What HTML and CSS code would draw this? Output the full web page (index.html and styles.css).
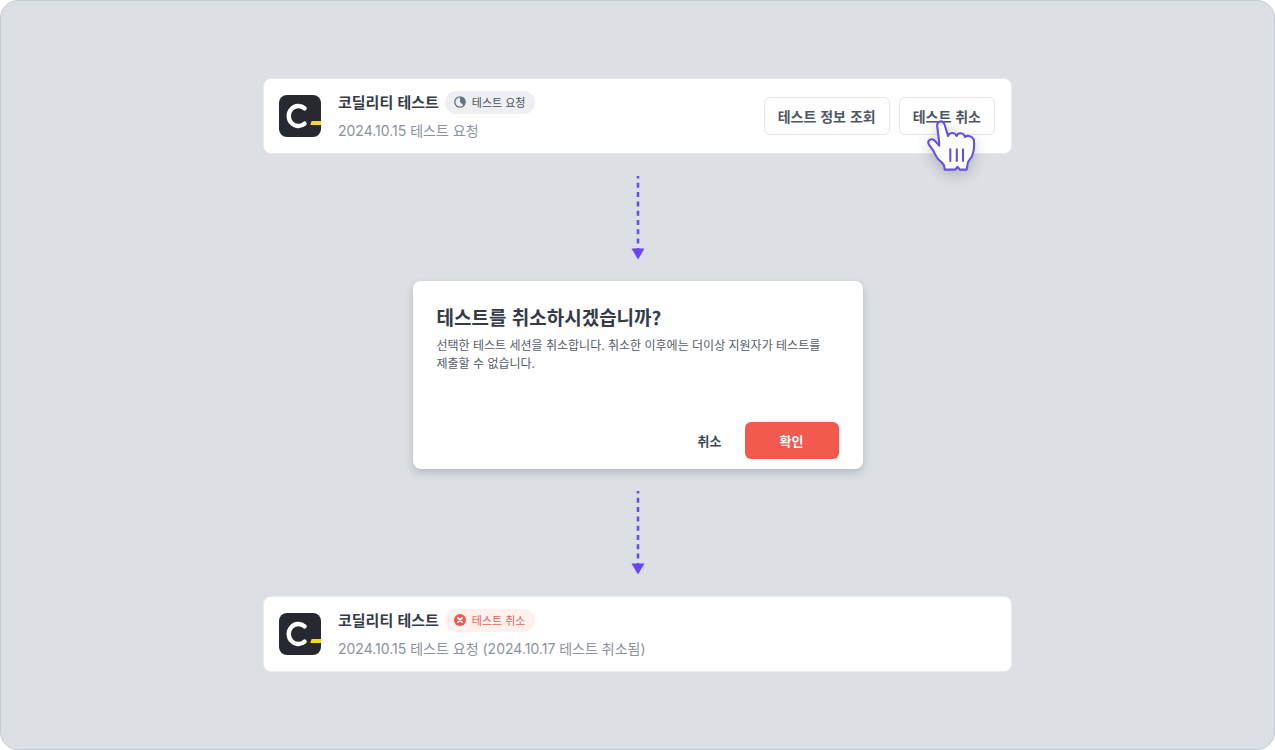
FILE: index.html
```
<!DOCTYPE html>
<html lang="ko">
<head>
  <meta charset="UTF-8">
  <meta name="viewport" content="width=device-width, initial-scale=1.0">
  <title>코딜리티 테스트 취소</title>
  <link rel="stylesheet" href="styles.css">
</head>
<body>
  <main class="board">

    <!-- 테스트 요청 상태 -->
    <section class="card">
      <svg class="logo" viewBox="0 0 42 42" aria-hidden="true">
        <rect width="42" height="42" rx="8" fill="#262930"/>
        <path d="M25.600 13.400A9.600 10 0 1 0 25.600 28.600" fill="none" stroke="#fff" stroke-width="4.4" stroke-linecap="round"/>
        <path d="M32.6 26H42v4H31.3z" fill="#f5dc17"/>
      </svg>
      <div class="info">
        <div class="title-row">
          <h2>코딜리티 테스트</h2>
          <span class="badge">
            <svg viewBox="0 0 12 12" aria-hidden="true">
              <circle cx="6" cy="6" r="5.2" fill="none" stroke="#68717e" stroke-width="1.3"/>
              <path d="M6 6V1a5 5 0 0 1 3.6 8.5z" fill="#68717e"/>
            </svg>
            테스트 요청
          </span>
        </div>
        <p class="date">2024.10.15 테스트 요청</p>
      </div>
      <div class="card-actions">
        <button type="button" class="btn">테스트 정보 조회</button>
        <div class="pointed">
          <button type="button" class="btn">테스트 취소</button>
          <svg class="hand" viewBox="10 8 56 56" aria-hidden="true">
            <path d="M24.2 32.3L22.2 16.5C21.7 10.3 28.3 9.8 29.7 15L33 26C34.5 22.2 40 22 41.5 26C43.3 22.2 48.5 22.3 50 27C52.5 24.7 57.2 26.2 58.8 29.5C59.6 36 59 42 56.8 46.5C55.5 48.8 53.4 50.4 52.8 53L51.7 59.6H44.8L42.6 56.8L40.2 59.6H29.6C30 55.6 28.4 53.5 25.5 51.4C21.5 48.5 20.6 45 18.5 41L14 34.7C11.4 29.8 16.8 28 19.5 30.4L24.2 35.6z" fill="#fff" stroke="#6450e6" stroke-width="2.1" stroke-linejoin="round"/>
            <path d="M35.3 39.2V51M41.8 39.2V51M48 39.2V51" fill="none" stroke="#6450e6" stroke-width="2.1" stroke-linecap="round"/>
          </svg>
        </div>
      </div>
    </section>

    <svg class="arrow" viewBox="0 0 14 83" aria-hidden="true">
      <path d="M7 0V75" stroke="#6450e6" stroke-width="2.6" stroke-dasharray="5 4.3" stroke-dashoffset="2.5"/>
      <path d="M.5 72.5h13L7 83.500z" fill="#6845fa"/>
    </svg>

    <!-- 확인 모달 -->
    <section class="dialog" role="dialog" aria-labelledby="dialog-title">
      <h1 id="dialog-title">테스트를 취소하시겠습니까?</h1>
      <p class="desc">선택한 테스트 세션을 취소합니다. 취소한 이후에는 더이상 지원자가 테스트를<br>제출할 수 없습니다.</p>
      <div class="dialog-actions">
        <button type="button" class="btn-text">취소</button>
        <button type="button" class="btn-danger">확인</button>
      </div>
    </section>

    <svg class="arrow" viewBox="0 0 14 83" aria-hidden="true">
      <path d="M7 0V75" stroke="#6450e6" stroke-width="2.6" stroke-dasharray="5 4.3" stroke-dashoffset="2.5"/>
      <path d="M.5 72.5h13L7 83.500z" fill="#6845fa"/>
    </svg>

    <!-- 테스트 취소 상태 -->
    <section class="card">
      <svg class="logo" viewBox="0 0 42 42" aria-hidden="true">
        <rect width="42" height="42" rx="8" fill="#262930"/>
        <path d="M25.600 13.400A9.600 10 0 1 0 25.600 28.600" fill="none" stroke="#fff" stroke-width="4.4" stroke-linecap="round"/>
        <path d="M32.6 26H42v4H31.3z" fill="#f5dc17"/>
      </svg>
      <div class="info">
        <div class="title-row">
          <h2>코딜리티 테스트</h2>
          <span class="badge badge-red">
            <svg viewBox="0 0 12 12" aria-hidden="true">
              <circle cx="6" cy="6" r="6" fill="#e65c53"/>
              <path d="M3.900 3.900l4.200 4.200M8.100 3.900L3.900 8.100" stroke="#fff" stroke-width="1.6" stroke-linecap="round"/>
            </svg>
            테스트 취소
          </span>
        </div>
        <p class="date">2024.10.15 테스트 요청 (2024.10.17 테스트 취소됨)</p>
      </div>
    </section>

  </main>
</body>
</html>
```
FILE: styles.css
```
* {
  box-sizing: border-box;
}

body {
  margin: 0;
  background: #fff;
  font-family: Inter, "Noto Sans CJK KR", sans-serif;
  color: #353b47;
}

h1, h2, p {
  margin: 0;
}

button {
  font-family: "Noto Sans CJK KR", sans-serif;
  cursor: pointer;
}

.board {
  min-height: 100vh;
  padding: 24px;
  display: flex;
  flex-direction: column;
  align-items: center;
  justify-content: center;
  gap: 22px;
  background: #dce0e5;
  border: 1px solid #c5cad3;
  border-radius: 18px;
}

/* 카드 */
.card {
  width: 100%;
  max-width: 749px;
  padding: 11px 16px 12px 15px;
  display: flex;
  align-items: center;
  gap: 17px;
  background: #fff;
  border: 1px solid #e8ebef;
  border-radius: 8px;
}

.logo {
  width: 42px;
  height: 42px;
  flex: none;
}

.info {
  flex: 1;
}

.title-row {
  display: flex;
  align-items: center;
  gap: 6px;
}

.title-row h2 {
  font-family: "Noto Sans CJK KR", sans-serif;
  font-size: 15px;
  font-weight: 700;
  line-height: 24px;
}

.badge {
  display: flex;
  align-items: center;
  gap: 6px;
  height: 23px;
  padding: 0 9px;
  border-radius: 12px;
  background: #eeeff3;
  font-family: "Noto Sans CJK KR", sans-serif;
  font-size: 11px;
  line-height: 23px;
  color: #4b525f;
}

.badge svg {
  width: 12px;
  height: 12px;
}

.badge-red {
  background: #fff1ee;
  color: #e0645c;
}

.date {
  margin-top: 7px;
  font-size: 14px;
  line-height: 20px;
  color: #8c929e;
}

.card-actions {
  display: flex;
  gap: 9px;
}

.btn {
  height: 38px;
  padding: 0 13px;
  background: #fff;
  border: 1px solid #e3e6eb;
  border-radius: 6px;
  font-size: 14px;
  font-weight: 600;
  color: #4f5663;
}

.pointed {
  position: relative;
}

/* 버튼 위에 올라간 손 커서 */
.hand {
  position: absolute;
  top: 21px;
  left: 26px;
  width: 56px;
  height: 56px;
  overflow: visible;
  pointer-events: none;
  filter: drop-shadow(0 4px 7px rgba(0, 0, 0, 0.2));
}

.arrow {
  width: 14px;
  height: 83px;
  flex: none;
}

/* 모달 */
.dialog {
  width: 100%;
  max-width: 450px;
  padding: 22px 24px 10px;
  background: #fff;
  border-radius: 8px;
  box-shadow: 0 4px 8px rgba(40, 48, 60, 0.2);
}

.dialog h1 {
  font-family: "Noto Sans CJK KR", sans-serif;
  font-size: 19px;
  font-weight: 700;
  line-height: 28px;
}

.desc {
  margin-top: 6px;
  font-size: 12px;
  line-height: 18px;
  color: #565d69;
}

.dialog-actions {
  margin-top: 49px;
  display: flex;
  justify-content: flex-end;
  gap: 8px;
}

.btn-text,
.btn-danger {
  height: 37px;
  border: none;
  border-radius: 6px;
  font-size: 13px;
  font-weight: 600;
}

.btn-text {
  padding: 0 15px;
  background: none;
  color: #404754;
}

.btn-danger {
  width: 94px;
  background: #f25a50;
  color: #fff;
}
```
